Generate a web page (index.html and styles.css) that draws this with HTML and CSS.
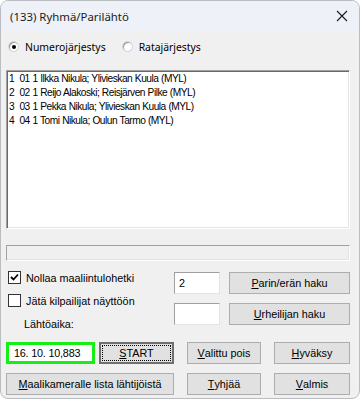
FILE: index.html
```html
<!DOCTYPE html>
<html>
<head>
<meta charset="utf-8">
<link rel="stylesheet" href="styles.css">
</head>
<body>
<div class="window">
  <div class="titlebar">
    <span class="title">(133) Ryhmä/Parilähtö</span>
    <svg class="close" width="12" height="12" viewBox="0 0 12 12"><path d="M1 1 L11 11 M11 1 L1 11" stroke="#1a1a1a" stroke-width="1.1" fill="none"/></svg>
  </div>
  <div class="client">
    <div class="radios">
      <div class="radio"><span class="rb on"></span><span>Numerojärjestys</span></div>
      <div class="radio r2"><span class="rb"></span><span class="clip">Ratajärjestys</span></div>
    </div>
    <div class="listbox">
      <div class="item">1&nbsp; 01 1 Ilkka Nikula; Ylivieskan Kuula (MYL)</div>
      <div class="item">2&nbsp; 02 1 Reijo Alakoski; Reisjärven Pilke (MYL)</div>
      <div class="item">3&nbsp; 03 1 Pekka Nikula; Ylivieskan Kuula (MYL)</div>
      <div class="item">4&nbsp; 04 1 Tomi Nikula; Oulun Tarmo (MYL)</div>
    </div>
    <div class="status"></div>
    <div class="mid">
      <div class="left">
        <div class="cb"><span class="box"><svg width="11" height="11" viewBox="0 0 11 11"><path d="M2 5 L4.5 7.5 L9 2.5" stroke="#000" stroke-width="1.8" fill="none"/></svg></span><span>Nollaa maaliintulohetki</span></div>
        <div class="cb cb2"><span class="box"></span><span>Jätä kilpailijat näyttöön</span></div>
        <div class="lbl">Lähtöaika:</div>
      </div>
      <div class="right">
        <div class="rrow"><div class="edit">2</div><div class="btn wide"><u>P</u>arin/erän haku</div></div>
        <div class="rrow r2"><div class="edit"></div><div class="btn wide"><u>U</u>rheilijan haku</div></div>
      </div>
    </div>
    <div class="row">
      <div class="time">16. 10. 10,883</div>
      <div class="btn start"><span class="focus"><u>S</u>TART</span></div>
      <div class="btn mid-btn"><u>V</u>alittu pois</div>
      <div class="btn last"><u>H</u>yväksy</div>
    </div>
    <div class="row row2">
      <div class="btn big"><u>M</u>aalikameralle lista lähtijöistä</div>
      <div class="btn mid-btn"><u>T</u>yhjää</div>
      <div class="btn last"><u>V</u>almis</div>
    </div>
  </div>
</div>
</body>
</html>
```

FILE: styles.css
```css
html, body {
  margin: 0;
  padding: 0;
  background: #ffffff;
}

.window {
  width: 358px;
  height: 397px;
  border: 1px solid #b9bcc0;
  border-radius: 8px;
  overflow: hidden;
  background: #f0f0f0;
  display: flex;
  flex-direction: column;
  font-family: "Liberation Sans", Arial, sans-serif;
  font-size: 10.8px;
  color: #000;
}

.titlebar {
  height: 30px;
  background: #eef2f8;
  display: flex;
  align-items: center;
  justify-content: space-between;
  padding: 0 10px 0 9px;
  flex-shrink: 0;
}

.title {
  font-family: "Noto Sans", "Open Sans", sans-serif;
  font-size: 11.4px;
  color: #1a1a1a;
}

.close {
  margin-right: 1px;
}

.client {
  display: flex;
  flex-direction: column;
  padding: 0 9px 0 5px;
}

.radios {
  display: flex;
  margin-top: 9px;
  height: 13px;
  align-items: center;
  font-family: "Noto Sans", "Open Sans", sans-serif;
  font-size: 10.4px;
}

.radio {
  display: flex;
  align-items: center;
  gap: 6px;
  margin-left: 2px;
}

.radio.r2 {
  margin-left: 16px;
}

.clip {
  display: inline-block;
  width: 64px;
  overflow: hidden;
  white-space: nowrap;
}

.rb {
  width: 11px;
  height: 11px;
  border-radius: 50%;
  background: #fff;
  border: 1px solid #d0d0d0;
  box-shadow: inset 1px 1px 0 #9a9a9a;
  position: relative;
  box-sizing: border-box;
}

.rb.on::after {
  content: "";
  position: absolute;
  left: 3px;
  top: 3px;
  width: 4px;
  height: 4px;
  border-radius: 50%;
  background: #000;
}

.listbox {
  margin-top: 17px;
  height: 159px;
  box-sizing: border-box;
  background: #fff;
  border-top: 1px solid #a0a0a0;
  border-left: 1px solid #a0a0a0;
  border-right: 1px solid #ffffff;
  border-bottom: 1px solid #ffffff;
  box-shadow: inset 1px 1px 0 #696969, inset -1px -1px 0 #e3e3e3;
  padding: 1px 2px;
  font-size: 10.2px;
  letter-spacing: -0.5px;
  word-spacing: 0.3px;
}

.item {
  line-height: 14px;
  white-space: pre;
}

.status {
  margin-top: 16px;
  height: 16px;
  box-sizing: border-box;
  border-top: 1px solid #a0a0a0;
  border-left: 1px solid #a0a0a0;
  border-right: 1px solid #ffffff;
  border-bottom: 1px solid #ffffff;
  box-shadow: inset -1px -1px 0 #e3e3e3;
}

.mid {
  display: flex;
  margin-top: 10px;
}

.left {
  width: 168px;
  display: flex;
  flex-direction: column;
}

.cb {
  display: flex;
  align-items: center;
  gap: 5px;
  height: 13px;
  margin-left: 2px;
}

.cb2 {
  margin-top: 10px;
}

.box {
  width: 13px;
  height: 13px;
  box-sizing: border-box;
  border: 1px solid #333;
  background: #fff;
  display: flex;
  align-items: center;
  justify-content: center;
}

.lbl {
  margin-top: 11px;
  margin-left: 18px;
  line-height: 13px;
}

.right {
  display: flex;
  flex-direction: column;
}

.rrow {
  display: flex;
  gap: 9px;
  margin-top: 1px;
}

.rrow.r2 {
  margin-top: 9px;
}

.edit {
  width: 46px;
  height: 22px;
  box-sizing: border-box;
  background: #fff;
  border: 1px solid #a0a0a0;
  border-right-color: #e3e3e3;
  border-bottom-color: #e3e3e3;
  padding: 3px 4px;
  line-height: 14px;
}

.btn {
  height: 22px;
  box-sizing: border-box;
  background: #e1e1e1;
  border: 1px solid #adadad;
  display: flex;
  align-items: center;
  justify-content: center;
}

.btn.wide {
  width: 121px;
}

.row {
  display: flex;
  margin-top: 11px;
  height: 22px;
}

.row2 {
  margin-top: 9px;
}

.time {
  width: 89px;
  height: 22px;
  box-sizing: border-box;
  border: 3px solid #16ee16;
  background: #fff;
  padding: 0 5px;
  line-height: 16px;
  letter-spacing: -0.2px;
}

.btn.start {
  width: 75px;
  margin-left: 4px;
  border: 2px solid #707070;
  padding: 1px;
}

.focus {
  flex: 1;
  align-self: stretch;
  border: 1px dotted #000;
  display: flex;
  align-items: center;
  justify-content: center;
}

.btn.mid-btn {
  width: 74px;
  margin-left: 13px;
}

.btn.last {
  width: 76px;
  margin-left: 13px;
}

.btn.big {
  width: 168px;
}
```
